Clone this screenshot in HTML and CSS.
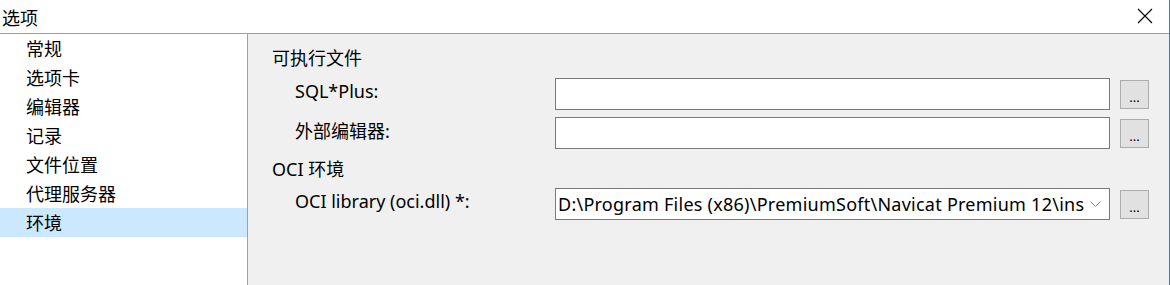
FILE: index.html
```html
<!DOCTYPE html>
<html lang="zh-CN">
<head>
    <meta charset="UTF-8">
    <title>选项</title>
    <link rel="stylesheet" href="styles.css">
</head>
<body>
    <div class="window">
        <div class="titlebar">
            <span class="title">选项</span>
            <span class="close">
                <svg width="16" height="16" viewBox="0 0 16 16"><path d="M1 1 L15 15 M15 1 L1 15" stroke="#000" stroke-width="1.1" fill="none"/></svg>
            </span>
        </div>
        <div class="content">
            <ul class="nav">
                <li>常规</li>
                <li>选项卡</li>
                <li>编辑器</li>
                <li>记录</li>
                <li>文件位置</li>
                <li>代理服务器</li>
                <li class="selected">环境</li>
            </ul>
            <div class="panel">
                <div class="group-title">可执行文件</div>
                <div class="row">
                    <label for="sqlplus">SQL*Plus:</label>
                    <input type="text" id="sqlplus" class="field">
                    <button class="browse">...</button>
                </div>
                <div class="row">
                    <label for="editor">外部编辑器:</label>
                    <input type="text" id="editor" class="field">
                    <button class="browse">...</button>
                </div>
                <div class="group-title second">OCI 环境</div>
                <div class="row">
                    <label>OCI library (oci.dll) *:</label>
                    <div class="field combo">
                        <span class="combo-text">D:\Program Files (x86)\PremiumSoft\Navicat Premium 12\ins</span>
                        <svg class="chevron" width="11" height="6" viewBox="0 0 11 6"><path d="M0.5 0.5 L5.5 5.5 L10.5 0.5" stroke="#808080" stroke-width="1" fill="none"/></svg>
                    </div>
                    <button class="browse">...</button>
                </div>
            </div>
        </div>
    </div>
</body>
</html>
```

FILE: styles.css
```css
body {
    margin: 0;
    font-family: "Noto Sans", "Noto Sans CJK SC", sans-serif;
    font-size: 18px;
    color: #000;
    background: #fff;
}
.window {
    width: 1170px;
    height: 285px;
    box-sizing: border-box;
    border-right: 1px solid #2b7fd4;
    display: flex;
    flex-direction: column;
    overflow: hidden;
}
.titlebar {
    height: 33px;
    flex: none;
    display: flex;
    align-items: center;
    justify-content: space-between;
    background: #fff;
    border-bottom: 1px solid #a0a0a0;
}
.title {
    padding-left: 2px;
    font-family: "Noto Sans CJK SC", sans-serif;
    line-height: 1;
}
.close {
    width: 16px;
    height: 16px;
    margin-right: 16px;
    margin-top: -2px;
}
.close svg {
    display: block;
}
.content {
    flex: 1;
    display: flex;
}
.nav {
    list-style: none;
    margin: 0;
    padding: 0;
    width: 247px;
    flex: none;
    background: #fff;
    border-right: 1px solid #a0a0a0;
}
.nav li {
    height: 29px;
    line-height: 29px;
    padding-left: 26px;
    font-family: "Noto Sans CJK SC", sans-serif;
}
.nav li.selected {
    background: #cce8ff;
}
.panel {
    flex: 1;
    background: #f0f0f0;
    padding: 12px 18px 0 24px;
}
.group-title {
    height: 24px;
    line-height: 24px;
    margin-bottom: 8px;
}
.group-title.second {
    margin-top: 8px;
    margin-bottom: 7px;
}
.row {
    display: flex;
    align-items: center;
    height: 32px;
    margin-bottom: 7px;
}
.row label {
    width: 260px;
    padding-left: 23px;
    flex: none;
    margin-top: -7px;
}
.field {
    width: 555px;
    height: 32px;
    box-sizing: border-box;
    border: 1px solid #7a7a7a;
    background: #fff;
    font: inherit;
    margin: 0;
    padding: 0 2px;
}
.combo {
    display: flex;
    align-items: center;
    overflow: hidden;
}
.combo-text {
    flex: 1;
    white-space: nowrap;
    letter-spacing: 0.25px;
}
.chevron {
    flex: none;
    margin: 0 7px 0 6px;
}
.browse {
    width: 29px;
    height: 29px;
    margin-left: 10px;
    box-sizing: border-box;
    border: 1px solid #adadad;
    background: #e1e1e1;
    font-family: "Noto Sans", sans-serif;
    font-size: 13px;
    padding: 6px 0 0;
    line-height: 13px;
}
```
